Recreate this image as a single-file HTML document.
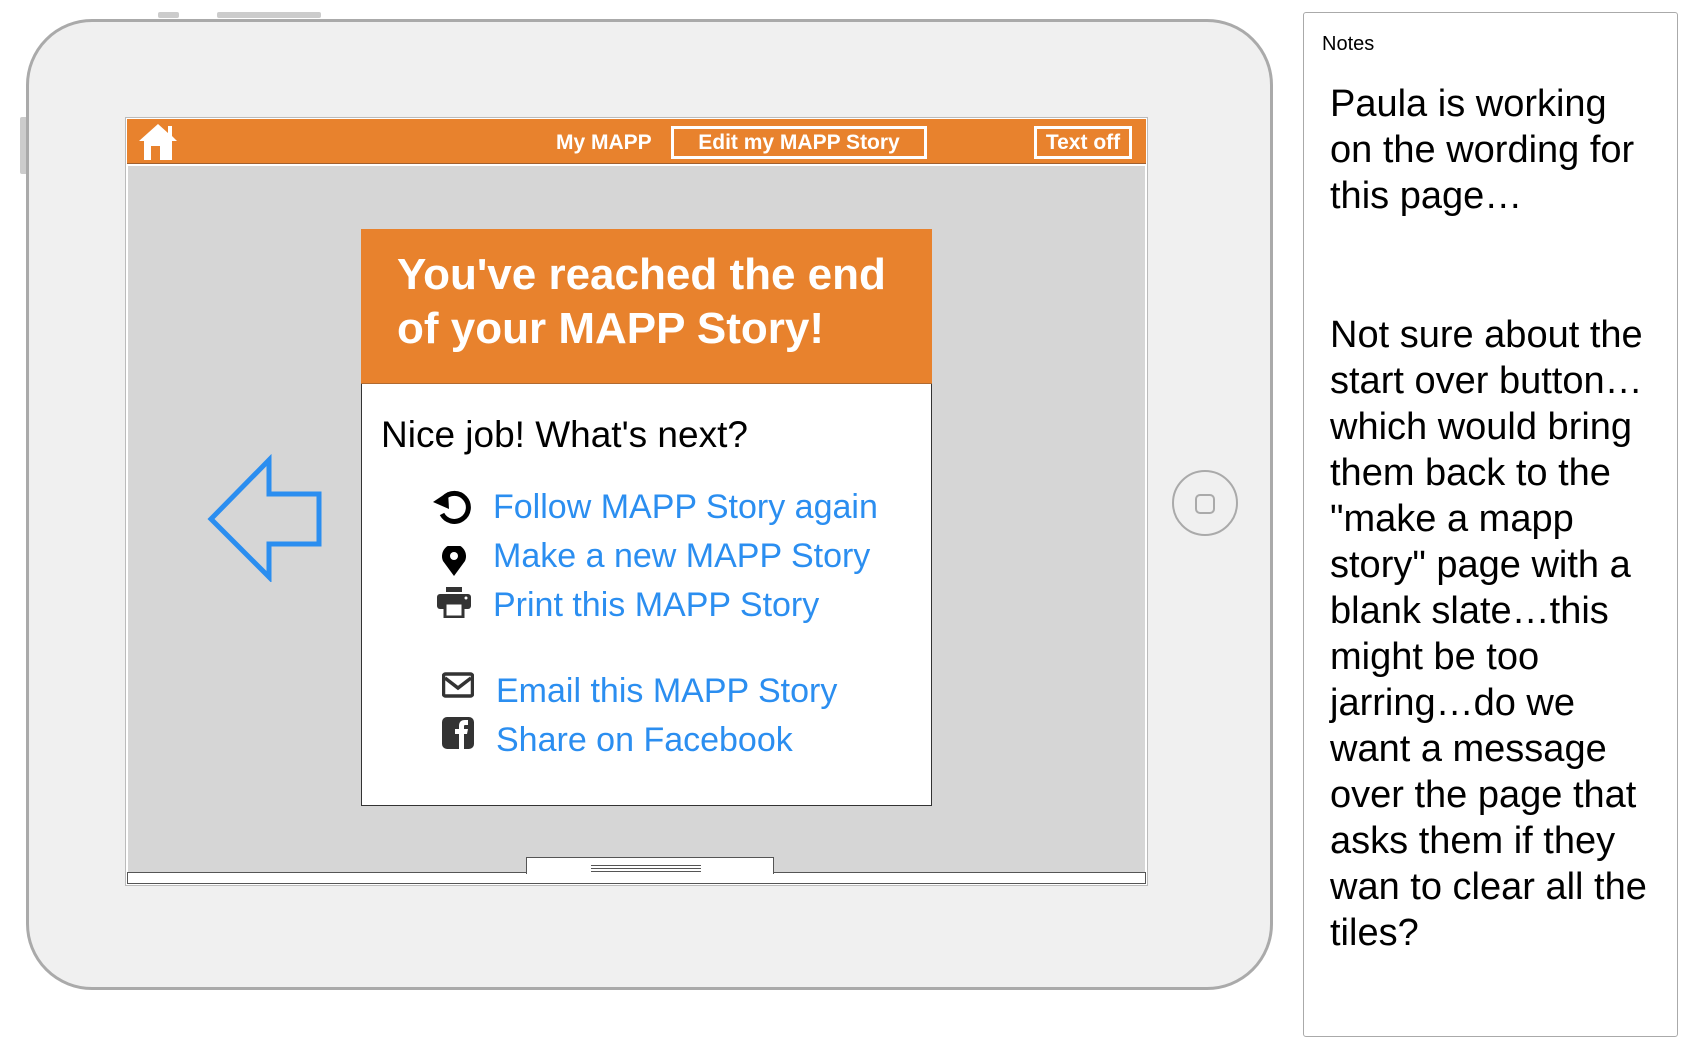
<!DOCTYPE html>
<html><head><meta charset="utf-8"><style>
*{margin:0;padding:0;box-sizing:border-box}
body{width:1692px;height:1057px;background:#fff;position:relative;overflow:hidden;font-family:"Liberation Sans",Arial,sans-serif}
.a{position:absolute}
.link{position:absolute;color:#2b8ef0;font-size:34px;white-space:nowrap;line-height:1}
.nt{position:absolute;left:1330px;font-size:38px;line-height:46px;color:#000;white-space:nowrap}
</style></head><body>
<div class="a" style="left:158px;top:12px;width:21px;height:6px;background:#ccc;border-radius:2px"></div>
<div class="a" style="left:217px;top:12px;width:104px;height:6px;background:#ccc;border-radius:2px"></div>
<div class="a" style="left:20px;top:117px;width:8px;height:57px;background:#ccc;border-radius:2px"></div>
<div class="a" style="left:26px;top:19px;width:1247px;height:971px;background:#f0f0f0;border:3px solid #aaa;border-radius:66px"></div>
<div class="a" style="left:125px;top:117px;width:1023px;height:769px;background:#fff;border:1px solid #bbb"></div>
<div class="a" style="left:127px;top:119px;width:1019px;height:45px;background:#e8822d;border-bottom:1px solid #a06030"></div>
<svg class="a" style="left:137px;top:123px" width="42" height="38" viewBox="0 0 42 38"><path d="M2 18 L21 1 L31 10 L31 3 L35 3 L35 13 L40 18 L35 18 L35 37 L7 37 L7 18 Z" fill="#fff"/><rect x="14" y="23" width="9" height="14" fill="#e8822d"/></svg>
<div class="a" style="left:556px;top:131px;color:#fff;font-weight:bold;font-size:21px">My MAPP</div>
<div class="a" style="left:671px;top:126px;width:256px;height:33px;border:3px solid #fff;color:#fff;font-weight:bold;font-size:21px;text-align:center;line-height:27px">Edit my MAPP Story</div>
<div class="a" style="left:1034px;top:126px;width:98px;height:33px;border:3px solid #fff;color:#fff;font-weight:bold;font-size:21px;text-align:center;line-height:27px">Text off</div>
<div class="a" style="left:128px;top:166px;width:1017px;height:706px;background:#d6d6d6"></div>
<div class="a" style="left:127px;top:872px;width:1019px;height:12px;background:#fff;border:1px solid #555"></div>
<div class="a" style="left:526px;top:857px;width:248px;height:17px;background:#fff;border:1px solid #555;border-bottom:none"></div>
<div class="a" style="left:591px;top:865px;width:110px;height:7px;border-top:1px solid #555;border-bottom:1px solid #555"></div>
<div class="a" style="left:591px;top:868px;width:110px;height:1px;background:#555"></div>
<svg class="a" style="left:205px;top:454px" width="120" height="128"><path d="M6 65 L64 6 L64 40 L114 40 L114 90 L64 90 L64 123 Z" fill="none" stroke="#2b8ef0" stroke-width="5" stroke-linejoin="miter"/></svg>
<div class="a" style="left:1172px;top:470px;width:66px;height:66px;border:2px solid #aaa;border-radius:50%"></div>
<div class="a" style="left:1195px;top:494px;width:20px;height:20px;border:2px solid #aaa;border-radius:5px"></div>
<div class="a" style="left:361px;top:229px;width:571px;height:577px;background:#fff;border:1px solid #333"></div>
<div class="a" style="left:361px;top:229px;width:571px;height:155px;background:#e8822d;border-bottom:1px solid #b06a30"></div>
<div class="a" style="left:397px;top:248px;color:#fff;font-weight:bold;font-size:44px;line-height:54px;white-space:nowrap">You've reached the end<br>of your MAPP Story!</div>
<div class="a" style="left:381px;top:414px;font-size:37px;white-space:nowrap">Nice job! What's next?</div>
<svg class="a" style="left:432px;top:488px" width="42" height="38" viewBox="0 0 42 38"><path d="M12 10 A14 14 0 1 1 10 26" fill="none" stroke="#000" stroke-width="5"/><path d="M1 14 L16 4 L17 21 Z" fill="#000"/></svg>
<svg class="a" style="left:440px;top:546px" width="28" height="30" viewBox="0 0 28 30"><path d="M14 30 L3 15 A12 12 0 1 1 25 15 Z" fill="#000"/><circle cx="14" cy="10" r="4" fill="#fff"/></svg>
<svg class="a" style="left:437px;top:587px" width="34" height="31" viewBox="0 0 34 31"><rect x="9" y="0" width="16" height="5" fill="#333"/><rect x="0" y="7" width="34" height="15" rx="3" fill="#333"/><rect x="8" y="16" width="18" height="14" fill="#fff" stroke="#333" stroke-width="3"/><circle cx="29" cy="11" r="1.5" fill="#fff"/></svg>
<svg class="a" style="left:442px;top:670px" width="32" height="33" viewBox="0 0 32 33"><rect x="1.5" y="4" width="29" height="22" rx="2" fill="none" stroke="#333" stroke-width="3.5"/><path d="M3 8 L16 18 L29 8" fill="none" stroke="#333" stroke-width="3.5"/></svg>
<svg class="a" style="left:442px;top:717px" width="32" height="32" viewBox="0 0 32 32"><rect width="32" height="32" rx="5" fill="#333"/><path d="M17 32 L17 17 L13 17 L13 12 L17 12 L17 9 C17 5 19 3 23 3 L26 3 L26 8 L23 8 C22 8 22 9 22 10 L22 12 L26 12 L25 17 L22 17 L22 32 Z" fill="#fff"/></svg>
<div class="link" style="left:493px;top:490px">Follow MAPP Story again</div>
<div class="link" style="left:493px;top:539px">Make a new MAPP Story</div>
<div class="link" style="left:493px;top:588px">Print this MAPP Story</div>
<div class="link" style="left:496px;top:674px">Email this MAPP Story</div>
<div class="link" style="left:496px;top:723px">Share on Facebook</div>
<div class="a" style="left:1303px;top:12px;width:375px;height:1025px;border:1px solid #aaa;border-radius:3px;background:#fff"></div>
<div class="a" style="left:1322px;top:33px;font-size:20px">Notes</div>
<div class="nt" style="top:81px">Paula is working<br>on the wording for<br>this page…</div>
<div class="nt" style="top:312px">Not sure about the<br>start over button…<br>which would bring<br>them back to the<br>"make a mapp<br>story" page with a<br>blank slate…this<br>might be too<br>jarring…do we<br>want a message<br>over the page that<br>asks them if they<br>wan to clear all the<br>tiles?</div>
</body></html>
